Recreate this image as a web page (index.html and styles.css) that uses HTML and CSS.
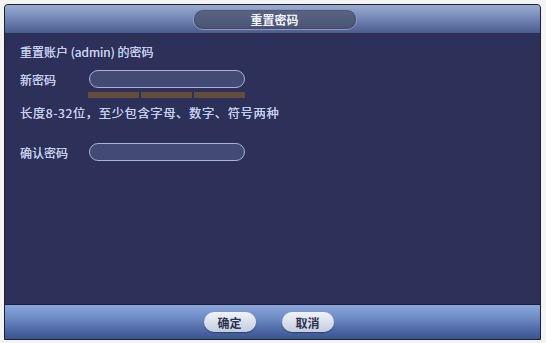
FILE: index.html
```html
<!DOCTYPE html>
<html lang="zh">
<head>
<meta charset="utf-8">
<link rel="stylesheet" href="styles.css">
</head>
<body>
<div class="dialog">
  <div class="header"><div class="title">重置密码</div></div>
  <div class="body">
    <div class="line">重置账户 (admin) 的密码</div>
    <div class="row first">
      <span class="label">新密码</span>
      <div class="field-col">
        <div class="input"></div>
        <div class="strength"><span></span><span></span><span></span></div>
      </div>
    </div>
    <div class="line hint">长度8-32位，至少包含字母、数字、符号两种</div>
    <div class="row confirm">
      <span class="label">确认密码</span>
      <div class="field-col"><div class="input"></div></div>
    </div>
  </div>
  <div class="footer">
    <div class="btn">确定</div>
    <div class="btn">取消</div>
  </div>
</div>
</body>
</html>
```
FILE: styles.css
```css
html, body { margin: 0; padding: 0; }
body {
  width: 546px; height: 343px;
  background: #f4f4f2;
  font-family: "Noto Sans CJK SC", "Noto Sans", sans-serif;
  padding: 4px 5px 5px 4px;
  box-sizing: border-box;
}
.dialog {
  height: 334px;
  display: flex; flex-direction: column;
  border: 1px solid #1c2035;
  border-radius: 4px 4px 0 0;
  overflow: hidden;
  background: #2d3159;
}
.header {
  height: 28px;
  flex: none;
  background: linear-gradient(#9aacd2 0%, #7689b8 45%, #4b5c8e 100%);
  display: flex; justify-content: center; align-items: center;
  border-bottom: 1px solid #27305a;
}
.title {
  width: 162px; height: 19px;
  margin-left: 4px;
  border-radius: 10px;
  background: linear-gradient(#5a6484, #4a5373);
  border: 1px solid #8d9ac0;
  box-shadow: 0 0 2px rgba(0,0,0,.4) inset;
  color: #f0f2fa;
  font-size: 12px; font-weight: bold;
  display: flex; justify-content: center; align-items: center;
}
.body {
  flex: 1;
  padding: 9px 0 0 15px;
  color: #c9d1f2;
  font-size: 12px;
  background: #2d3159;
  text-shadow: 0 0 0.4px #c9d1f2;
}
.line { height: 17px; line-height: 17px; }
.row { display: flex; align-items: flex-start; }
.row.first { margin-top: 10px; }
.label { width: 69px; line-height: 19px; flex: none; }
.field-col { display: flex; flex-direction: column; }
.input {
  width: 154px; height: 16px;
  border: 1.5px solid #a7b1d4;
  border-radius: 9px;
  background: #434b75;
}
.strength { display: flex; gap: 2px; margin-top: 4px; width: 157px; margin-left: -1px; }
.strength span { flex: 1; height: 6px; background: #634c3c; }
.hint { margin-top: 7px; font-size: 12.3px; letter-spacing: 0.6px; }
.row.confirm { margin-top: 21px; }
.footer {
  height: 34px; flex: none;
  border-top: 1px solid #1c2035;
  background: linear-gradient(#8aa6dc 0%, #6e8ac4 40%, #4b67a4 75%, #3b5490 100%);
  display: flex; justify-content: center; align-items: center; gap: 26px;
  padding-right: 8px;
}
.btn {
  width: 52px; height: 20px;
  border-radius: 10px;
  background: linear-gradient(#f1f3f9, #c4cce0);
  box-shadow: 0 1px 1px rgba(0,0,0,.35);
  color: #2c3250;
  font-size: 12px; font-weight: bold;
  display: flex; justify-content: center; align-items: center;
}
```
